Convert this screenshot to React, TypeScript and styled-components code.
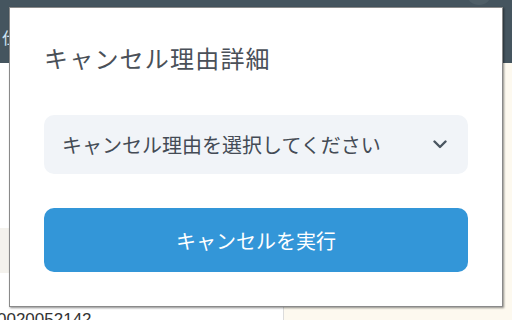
import * as React from "react";
import styled, { createGlobalStyle } from "styled-components";

const GlobalStyle = createGlobalStyle`
  html, body {
    margin: 0;
    padding: 0;
    background: #ffffff;
    font-family: "Noto Sans CJK JP", "Noto Sans", sans-serif;
  }
`;

const Page = styled.div`
  position: relative;
  width: 512px;
  height: 320px;
  overflow: hidden;
  display: flex;
  flex-direction: column;
`;

const TopBar = styled.header`
  height: 63px;
  flex: none;
  background: #45555f;
  display: flex;
  align-items: center;
  justify-content: space-between;
  padding: 0 20px 0 2px;
`;

const NavLabel = styled.span`
  font-size: 16px;
  color: #cfe3f2;
  margin-top: 10px;
`;

const Avatar = styled.span`
  width: 26px;
  height: 26px;
  border-radius: 50%;
  background: #4f5f68;
  align-self: flex-start;
  margin-top: -21px;
`;

const Body = styled.div`
  flex: 1;
  display: grid;
  grid-template-columns: 283px 1fr;
`;

const LeftPane = styled.div`
  background: #ffffff;
  display: flex;
  flex-direction: column;
`;

const Stripe = styled.div`
  margin-top: 165px;
  height: 45px;
  background: #f4f2ed;
`;

const OrderNo = styled.div`
  margin-top: 37px;
  margin-left: -3px;
  font-family: "Liberation Sans", Arial, sans-serif;
  font-size: 17px;
  color: #333333;
  line-height: 20px;
`;

const RightPane = styled.div`
  background: #fdf9ef;
  border-left: 1px solid #dcdcdc;
`;

const Modal = styled.div`
  position: absolute;
  left: 9px;
  top: 7px;
  width: 494px;
  height: 300px;
  box-sizing: border-box;
  padding: 34px;
  background: #ffffff;
  border: 1px solid #8a8a8a;
  box-shadow: 1px 1px 2px rgba(0, 0, 0, 0.45);
  display: flex;
  flex-direction: column;
`;

const Title = styled.h2`
  margin: 0;
  font-size: 24px;
  font-weight: 400;
  letter-spacing: 1.2px;
  line-height: 32px;
  color: #4a5058;
`;

const Select = styled.div`
  margin-top: 41px;
  height: 59px;
  flex: none;
  box-sizing: border-box;
  border-radius: 10px;
  background: #f1f4f8;
  display: flex;
  align-items: center;
  justify-content: space-between;
  padding: 0 21px 0 18px;
  font-size: 20px;
  color: #444b55;
`;

const Button = styled.button`
  margin-top: 34px;
  height: 64px;
  flex: none;
  border: none;
  border-radius: 10px;
  background: #3396d8;
  color: #ffffff;
  font-family: inherit;
  font-size: 20px;
  cursor: pointer;
`;

const Chevron = () => (
  <svg width="14" height="9" viewBox="0 0 14 9" fill="none">
    <path d="M1.5 1.5 L7 7 L12.5 1.5" stroke="#4a5560" strokeWidth="2.4" strokeLinecap="round" strokeLinejoin="round" />
  </svg>
);

export default function App() {
  return (
    <>
      <GlobalStyle />
      <Page>
        <TopBar>
          <NavLabel>仕入</NavLabel>
          <Avatar />
        </TopBar>
        <Body>
          <LeftPane>
            <Stripe />
            <OrderNo>0020052142</OrderNo>
          </LeftPane>
          <RightPane />
        </Body>
        <Modal>
          <Title>キャンセル理由詳細</Title>
          <Select>
            <span>キャンセル理由を選択してください</span>
            <Chevron />
          </Select>
          <Button>キャンセルを実行</Button>
        </Modal>
      </Page>
    </>
  );
}
